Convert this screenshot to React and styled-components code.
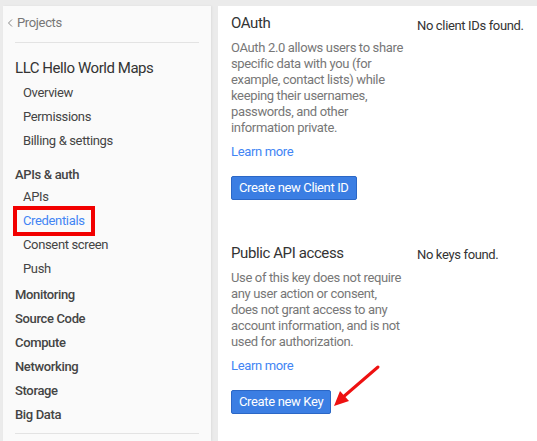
import React from 'react'
import styled, { createGlobalStyle } from 'styled-components'

const GlobalStyle = createGlobalStyle`
  html, body {
    margin: 0;
    padding: 0;
    background: #ebebeb;
    font-family: Roboto, "Liberation Sans", Arial, sans-serif;
    letter-spacing: -0.35px;
  }
`

const Page = styled.div`
  display: flex;
  gap: 7px;
  width: 537px;
  height: 441px;
  padding: 6px 0 0 3px;
  box-sizing: border-box;
  overflow: hidden;
`

const Sidebar = styled.nav`
  width: 208px;
  flex-shrink: 0;
  background: #fafafa;
  box-shadow: 1px 0 2px rgba(0, 0, 0, 0.06);
  padding: 0 12px;
  box-sizing: border-box;
`

const Back = styled.div`
  margin-top: 7px;
  height: 20px;
  line-height: 20px;
  font-size: 13px;
  color: #777;
  display: flex;
  align-items: center;
  gap: 4px;
  margin-left: -8px;
`

const Chevron = styled.svg`
  width: 6px;
  height: 8px;
`

const Divider = styled.div`
  height: 1px;
  background: #e3e3e3;
  margin-top: ${p => p.$top || 0}px;
`

const ProjectName = styled.div`
  margin-top: 12px;
  height: 26px;
  line-height: 26px;
  font-size: 15px;
  letter-spacing: -0.45px;
  color: #333;
`

const SectionHead = styled.div`
  margin-top: ${p => p.$top || 0}px;
  height: ${p => p.$h || 24}px;
  line-height: ${p => p.$h || 24}px;
  font-size: 13px;
  font-weight: 500;
  color: #444;
`

const NavItem = styled.div`
  position: relative;
  height: 24px;
  line-height: 24px;
  font-size: 13px;
  padding-left: 8px;
  color: ${p => (p.$active ? '#4285f4' : '#444')};
`

const Highlight = styled.span`
  position: absolute;
  left: -2px;
  top: -3px;
  width: 82px;
  height: 30px;
  border: 4px solid #f20000;
  box-sizing: border-box;
`

const Main = styled.main`
  flex: 1;
  position: relative;
  background: #fff;
  padding: 7px 13px 0;
`

const Section = styled.section`
  display: grid;
  grid-template-columns: 173px 1fr;
  column-gap: 13px;
  margin-top: ${p => p.$top || 0}px;
`

const Title = styled.h2`
  margin: 0;
  height: 20px;
  line-height: 20px;
  font-size: 15px;
  font-weight: 400;
  letter-spacing: -0.4px;
  color: #333;
`

const Desc = styled.p`
  margin: 7px 0 0;
  font-size: 13px;
  line-height: 16px;
  color: #777;
`

const LearnMore = styled.a`
  display: block;
  margin-top: 8px;
  font-size: 13px;
  line-height: 16px;
  color: #4285f4;
  text-decoration: none;
`

const Button = styled.button`
  margin-top: 16px;
  height: 24px;
  padding: 0 7px;
  border: 1px solid #2b67c6;
  border-radius: 2px;
  background: #3b7ee3;
  color: #fff;
  font-family: inherit;
  letter-spacing: inherit;
  font-size: 13px;
  line-height: 22px;
  white-space: nowrap;
`

const Empty = styled.div`
  padding-top: ${p => p.$top || 0}px;
  font-size: 13px;
  line-height: 20px;
  white-space: nowrap;
  color: #333;
`

const Arrow = styled.svg`
  position: absolute;
  left: 112px;
  top: 358px;
  width: 52px;
  height: 46px;
`

const subItems = ['Overview', 'Permissions', 'Billing & settings']
const authItems = ['APIs', 'Credentials', 'Consent screen', 'Push']
const sections = ['Source Code', 'Compute', 'Networking', 'Storage', 'Big Data']

function App() {
  return (
    <>
      <GlobalStyle />
      <Page>
        <Sidebar>
          <Back>
            <Chevron viewBox="0 0 6 8">
              <path d="M5 0.5 L1.5 4 L5 7.5" fill="none" stroke="#888" strokeWidth="1" />
            </Chevron>
            Projects
          </Back>
          <Divider $top={9} />
          <ProjectName>LLC Hello World Maps</ProjectName>
          {subItems.map(s => <NavItem key={s}>{s}</NavItem>)}
          <SectionHead $top={11} $h={21}>APIs &amp; auth</SectionHead>
          {authItems.map(s => (
            <NavItem key={s} $active={s === 'Credentials'}>
              {s === 'Credentials' && <Highlight />}
              {s}
            </NavItem>
          ))}
          <SectionHead $top={2}>Monitoring</SectionHead>
          {sections.map(s => <SectionHead key={s}>{s}</SectionHead>)}
          <Divider $top={6} />
        </Sidebar>

        <Main>
          <Section>
            <div>
              <Title>OAuth</Title>
              <Desc>
                OAuth 2.0 allows users to share specific data with you (for example, contact lists) while
                keeping their usernames, passwords, and other information private.
              </Desc>
              <LearnMore href="#">Learn more</LearnMore>
              <Button>Create new Client ID</Button>
            </div>
            <Empty $top={3}>No client IDs found.</Empty>
          </Section>

          <Section $top={43}>
            <div>
              <Title>Public API access</Title>
              <Desc>
                Use of this key does not require any user action or consent, does not grant access to any
                account information, and is not used for authorization.
              </Desc>
              <LearnMore href="#">Learn more</LearnMore>
              <Button>Create new Key</Button>
            </div>
            <Empty $top={2}>No keys found.</Empty>
          </Section>

          <Arrow viewBox="0 0 52 46">
            <line x1="48" y1="3" x2="12" y2="34" stroke="#ee1111" strokeWidth="3" strokeLinecap="round" />
            <polygon points="4,42 10,27 19,37" fill="#ee1111" />
          </Arrow>
        </Main>
      </Page>
    </>
  )
}

export default App
